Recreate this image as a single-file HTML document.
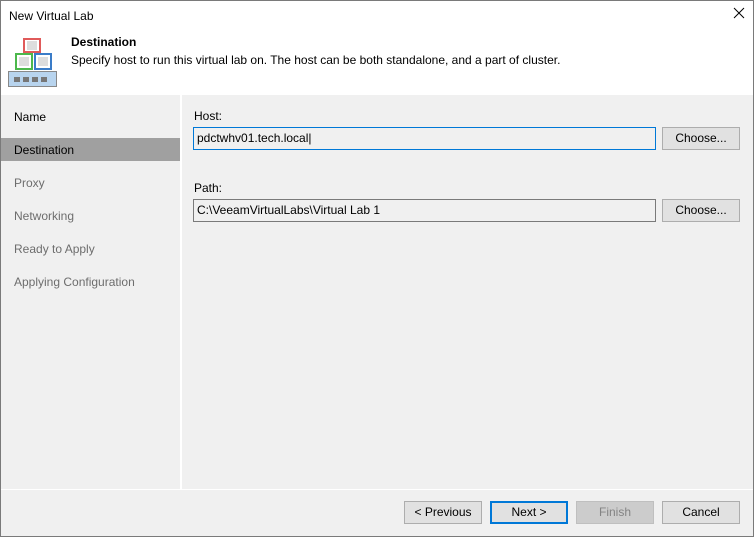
<!DOCTYPE html>
<html><head><style>
*{margin:0;padding:0;box-sizing:border-box}
body{width:754px;height:537px;overflow:hidden;background:#f0f0f0;font-family:"Liberation Sans",sans-serif;font-size:12px;color:#000;position:relative}
.a{position:absolute}
.win{left:0;top:0;width:754px;height:537px;border:1px solid #7a7a7a}
.btn{position:absolute;height:23px;background:#e1e1e1;border:1px solid #adadad;text-align:center;line-height:21px;font-size:12px}
.inp{position:absolute;height:23px;background:#f0f0f0;border:1px solid #7a7a7a;padding-left:3px;line-height:21px}
.nav{position:absolute;left:14px;color:#000}
</style></head><body>
<div class="a" style="left:0;top:0;width:754px;height:95px;background:#fff"></div>
<div class="a" style="left:9px;top:9px;font-size:12px">New Virtual Lab</div>
<svg class="a" style="left:733px;top:7px" width="12" height="12"><path d="M1 1L11 11M11 1L1 11" stroke="#000" stroke-width="1"/></svg>
<svg class="a" style="left:0;top:0" width="70" height="95">
<rect x="24" y="39" width="16" height="13" fill="#fff" stroke="#e05a5a" stroke-width="2"/><rect x="27" y="41" width="10" height="9" fill="#ddd"/>
<rect x="16" y="54" width="16" height="15" fill="#fff" stroke="#4cb84c" stroke-width="2"/><rect x="19" y="57" width="10" height="9" fill="#ddd"/>
<rect x="35" y="54" width="16" height="15" fill="#fff" stroke="#3a7cc8" stroke-width="2"/><rect x="38" y="57" width="10" height="9" fill="#ddd"/>
<rect x="8.5" y="71.5" width="48" height="15" fill="#b8d4ee" stroke="#888"/>
<g fill="#777"><rect x="14" y="77" width="6" height="5"/><rect x="23" y="77" width="6" height="5"/><rect x="32" y="77" width="6" height="5"/><rect x="41" y="77" width="6" height="5"/></g>
</svg>
<div class="a" style="left:71px;top:35px;font-weight:bold">Destination</div>
<div class="a" style="left:71px;top:53px">Specify host to run this virtual lab on. The host can be both standalone, and a part of cluster.</div>
<div class="a" style="left:180px;top:95px;width:2px;height:394px;background:#fff"></div>
<div class="a" style="left:0;top:138px;width:180px;height:23px;background:#a0a0a0"></div>
<div class="nav" style="top:110px">Name</div>
<div class="nav" style="top:143px">Destination</div>
<div class="nav" style="top:176px;color:#6d6d6d">Proxy</div>
<div class="nav" style="top:209px;color:#6d6d6d">Networking</div>
<div class="nav" style="top:242px;color:#6d6d6d">Ready to Apply</div>
<div class="nav" style="top:275px;color:#6d6d6d">Applying Configuration</div>
<div class="a" style="left:194px;top:109px">Host:</div>
<div class="inp" style="left:193px;top:127px;width:463px;border-color:#0078d7">pdctwhv01.tech.local|</div>
<div class="btn" style="left:662px;top:127px;width:78px">Choose...</div>
<div class="a" style="left:194px;top:181px">Path:</div>
<div class="inp" style="left:193px;top:199px;width:463px">C:\VeeamVirtualLabs\Virtual Lab 1</div>
<div class="btn" style="left:662px;top:199px;width:78px">Choose...</div>
<div class="a" style="left:0;top:489px;width:754px;height:1px;background:#fff"></div>
<div class="btn" style="left:404px;top:501px;width:78px">&lt; Previous</div>
<div class="btn" style="left:490px;top:501px;width:78px;border:2px solid #0078d7;line-height:19px">Next &gt;</div>
<div class="btn" style="left:576px;top:501px;width:78px;background:#ccc;border-color:#bfbfbf;color:#838383">Finish</div>
<div class="btn" style="left:662px;top:501px;width:78px">Cancel</div>
<div class="a win"></div>
</body></html>
